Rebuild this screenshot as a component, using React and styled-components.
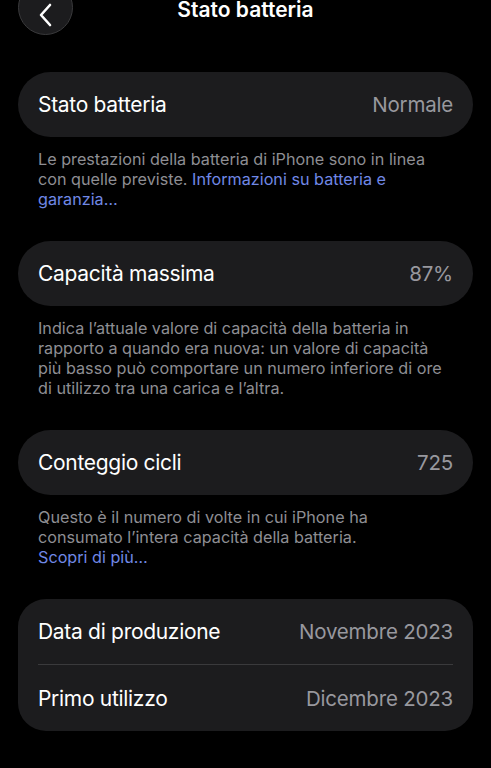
import styled, { createGlobalStyle } from "styled-components";

const GlobalStyle = createGlobalStyle`
  html, body {
    margin: 0;
    padding: 0;
    background: #000;
  }
  body {
    font-family: Inter, "Noto Sans", sans-serif;
    -webkit-font-smoothing: antialiased;
  }
`;

const Page = styled.div`
  width: 491px;
  height: 768px;
  overflow: hidden;
  background: #000;
  padding: 0 18px;
  box-sizing: border-box;
`;

const Header = styled.div`
  position: relative;
  height: 56px;
  margin-top: -20px;
  display: flex;
  align-items: center;
  justify-content: center;
`;

const BackButton = styled.button`
  position: absolute;
  left: 0;
  top: 0;
  width: 55px;
  height: 55px;
  border-radius: 50%;
  background: #1c1c1e;
  border: 1px solid #3a3a3c;
  display: flex;
  align-items: center;
  justify-content: center;
  padding: 0;
  box-sizing: border-box;
`;

const Title = styled.h1`
  margin: 0;
  font-size: 21px;
  font-weight: 600;
  color: #fff;
  letter-spacing: 0;
  transform: translateY(1px);
`;

const Card = styled.div`
  background: #1c1c1e;
  border-radius: ${(p) => (p.$multi ? "28px" : "33px")};
  margin-top: ${(p) => p.$top || 0}px;
  padding: 0 20px;
`;

const Row = styled.div`
  height: 65px;
  display: flex;
  align-items: center;
  justify-content: space-between;
  & + & {
    border-top: 1px solid #3a3a3c;
    height: 66px;
  }
`;

const Label = styled.span`
  color: #fff;
  font-size: 21px;
  letter-spacing: -0.3px;
`;

const Value = styled.span`
  color: #98989e;
  font-size: 20.5px;
  letter-spacing: -0.2px;
`;

const Footer = styled.p`
  margin: 0;
  padding: 12px 20px 32px;
  color: #8e8e93;
  font-size: 16.2px;
  line-height: 20px;
  letter-spacing: 0;
`;

const Link = styled.span`
  color: #7088e6;
`;

export default function App() {
  return (
    <Page>
      <GlobalStyle />
      <Header>
        <BackButton>
          <svg width="20" height="24" viewBox="0 0 20 24" style={{ marginTop: 14 }}>
            <path
              d="M14 2 L5 12 L14 22"
              fill="none"
              stroke="#fff"
              strokeWidth="2.6"
              strokeLinecap="round"
              strokeLinejoin="round"
            />
          </svg>
        </BackButton>
        <Title>Stato batteria</Title>
      </Header>

      <Card $top={36}>
        <Row>
          <Label>Stato batteria</Label>
          <Value>Normale</Value>
        </Row>
      </Card>
      <Footer>
        Le prestazioni della batteria di iPhone sono in linea con quelle
        previste. <Link>Informazioni su batteria e garanzia…</Link>
      </Footer>

      <Card>
        <Row>
          <Label>Capacità massima</Label>
          <Value>87%</Value>
        </Row>
      </Card>
      <Footer>
        Indica l’attuale valore di capacità della batteria in rapporto a quando
        era nuova: un valore di capacità più basso può comportare un numero
        inferiore di ore di utilizzo tra una carica e l’altra.
      </Footer>

      <Card>
        <Row>
          <Label>Conteggio cicli</Label>
          <Value>725</Value>
        </Row>
      </Card>
      <Footer>
        Questo è il numero di volte in cui iPhone ha consumato l’intera capacità
        della batteria. <br />
        <Link>Scopri di più…</Link>
      </Footer>

      <Card $multi>
        <Row>
          <Label>Data di produzione</Label>
          <Value>Novembre 2023</Value>
        </Row>
        <Row>
          <Label>Primo utilizzo</Label>
          <Value>Dicembre 2023</Value>
        </Row>
      </Card>
    </Page>
  );
}
